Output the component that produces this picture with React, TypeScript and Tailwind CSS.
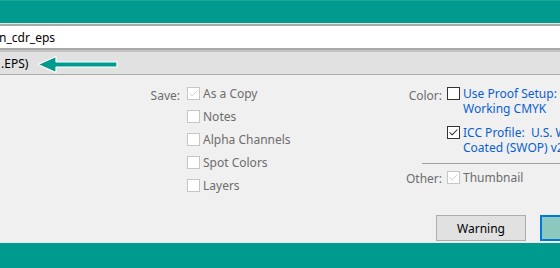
import { Check } from "lucide-react"

const SAVE_OPTIONS = [
  { label: "As a Copy", checked: true },
  { label: "Notes", checked: false },
  { label: "Alpha Channels", checked: false },
  { label: "Spot Colors", checked: false },
  { label: "Layers", checked: false },
]

function Box({ checked, disabled }: { checked?: boolean; disabled?: boolean }) {
  return (
    <span
      className={
        "w-[13px] h-[13px] flex items-center justify-center shrink-0 bg-white border " +
        (disabled ? "border-[#c6c6c6]" : "border-[#333333]")
      }
    >
      {checked && (
        <Check size={11} strokeWidth={disabled ? 1.6 : 2.2} className={disabled ? "text-[#bcbcbc]" : "text-[#222]"} />
      )}
    </span>
  )
}

export default function App() {
  return (
    <div
      className="w-[560px] h-[268px] overflow-hidden flex flex-col bg-[#f0f0f0] text-[12px] leading-[15px]"
      style={{ fontFamily: '"Noto Sans", "Open Sans", sans-serif' }}
    >
      {/* top band */}
      <div className="h-[23px] shrink-0 bg-[#009b8e] border-t border-[#1aa597]" />
      <div className="h-[1px] shrink-0 bg-[#e4e4e4]" />
      <div className="h-[2px] shrink-0 bg-[#a9a9a9]" />

      {/* file name */}
      <div className="h-[22px] shrink-0 bg-white flex items-center -ml-[1px] text-black">n_cdr_eps</div>
      <div className="h-[2px] shrink-0 bg-[#a9a9a9]" />
      <div className="h-[2px] shrink-0 bg-[#c4c4c4]" />

      {/* format */}
      <div className="h-[22px] shrink-0 bg-[#e1e1e1] flex items-center text-black">
        <span className="pl-[1px]">.EPS)</span>
        <svg width="82" height="19" viewBox="0 0 82 19" className="ml-[9px] mt-[2px]">
          <path d="M1 9.5 L19 1.5 L19 6.8 L80 6.8 L80 12.2 L19 12.2 L19 17.5 Z" fill="#009b8e" stroke="#ffffff" strokeWidth="1.2" strokeLinejoin="round" />
        </svg>
      </div>
      <div className="h-[1px] shrink-0 bg-[#ababab]" />

      {/* options */}
      <div className="flex-1 flex flex-col">
        <div className="flex pt-[12px]">
          {/* Save group */}
          <div className="flex ml-[150px] w-[254px] shrink-0">
            <div className="w-[30px] text-right text-[#6d6d6d] pt-[1px]">Save:</div>
            <div className="flex flex-col gap-[10px] ml-[7px]">
              {SAVE_OPTIONS.map((o) => (
                <div key={o.label} className="flex items-center gap-[3px] h-[13px] text-[#6d6d6d]">
                  <Box checked={o.checked} disabled />
                  <span className="whitespace-nowrap">{o.label}</span>
                </div>
              ))}
            </div>
          </div>

          {/* Color group */}
          <div className="flex flex-col shrink-0">
            <div className="flex">
              <div className="w-[38px] text-right text-[#6d6d6d] pt-[1px]">Color:</div>
              <div className="flex flex-col ml-[5px] gap-[10px]">
                <div className="flex items-start gap-[3px]">
                  <Box />
                  <span className="text-[#0a5fcf] whitespace-nowrap -mt-[1px]">
                    Use Proof Setup:
                    <br />
                    Working CMYK
                  </span>
                </div>
                <div className="flex items-start gap-[3px]">
                  <Box checked />
                  <span className="text-[#0a5fcf] whitespace-nowrap -mt-[1px]">
                    ICC Profile:&nbsp; U.S. Web
                    <br />
                    Coated (SWOP) v2
                  </span>
                </div>
              </div>
            </div>
            <div className="h-[1px] bg-[#a0a0a0] ml-[18px] w-[200px] mt-[8px]" />
            <div className="flex mt-[6px]">
              <div className="w-[38px] text-right text-[#6d6d6d] pt-[1px]">Other:</div>
              <div className="flex items-center gap-[3px] ml-[5px] h-[13px] mt-[1px] text-[#6d6d6d]">
                <Box checked disabled />
                <span>Thumbnail</span>
              </div>
            </div>
          </div>
        </div>

        {/* buttons */}
        <div className="mt-auto flex gap-[14px] ml-[436px] mb-[1px]">
          <button className="w-[90px] h-[26px] shrink-0 bg-[#e1e1e1] border border-[#adadad] text-black">Warning</button>
          <button className="w-[76px] h-[26px] shrink-0 bg-[#8cc8bd] border-2 border-[#0078d7]" />
        </div>
      </div>

      {/* bottom band */}
      <div className="h-[1px] shrink-0 bg-[#e8e8e8]" />
      <div className="h-[25px] shrink-0 bg-[#009b8e]" />
    </div>
  )
}
